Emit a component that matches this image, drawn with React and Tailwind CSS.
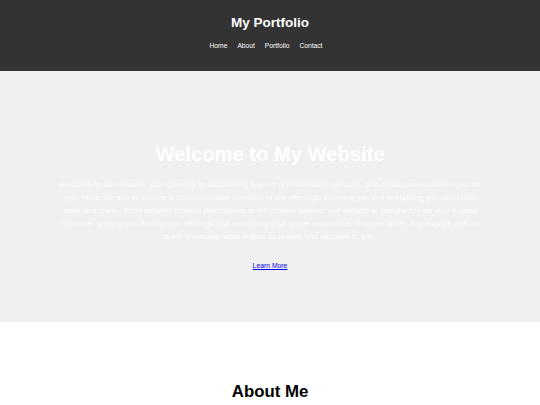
export default function App() {
    return (
        <div className="min-h-screen bg-white font-['Liberation_Sans',Arial,sans-serif]">
            <header className="h-[71px] bg-[#333333] text-white flex flex-col items-center pt-[15px]">
                <h1 className="text-[13.5px] font-bold leading-[15.5px]">My Portfolio</h1>
                <nav className="flex gap-[10px] mt-[11px] pr-[8px] text-[6.7px] leading-[8px]">
                    <a href="#" className="text-white">Home</a>
                    <a href="#" className="text-white">About</a>
                    <a href="#" className="text-white">Portfolio</a>
                    <a href="#" className="text-white">Contact</a>
                </nav>
            </header>

            <section className="h-[251px] bg-[#f0f0f0] flex flex-col items-center pt-[72px] text-center">
                <h2 className="text-[20.2px] font-bold leading-[23px] text-white">
                    Welcome to My Website
                </h2>
                <p className="mt-[12px] max-w-[428px] text-[8px] leading-[13px] text-[#fcfcfc]">
                    Welcome to our website, your gateway to discovering a world of information, services, and
                    opportunities tailored just for you. Here, we aim to provide a comprehensive overview of our
                    offerings, ensuring you find everything you need with ease and clarity. From detailed product
                    descriptions to informative articles, our website is designed to be your trusted resource,
                    guiding you through our offerings and enhancing your online experience. Explore, learn, and
                    engage with us as we showcase what makes us unique and valuable to you..
                </p>
                <a href="#" className="mt-[19px] text-[6.8px] leading-[8px] text-[#0000ee] underline">
                    Learn More
                </a>
            </section>

            <section className="flex flex-col items-center pt-[60px]">
                <h2 className="text-[16.8px] font-bold leading-[19px] text-black">About Me</h2>
            </section>
        </div>
    );
}
